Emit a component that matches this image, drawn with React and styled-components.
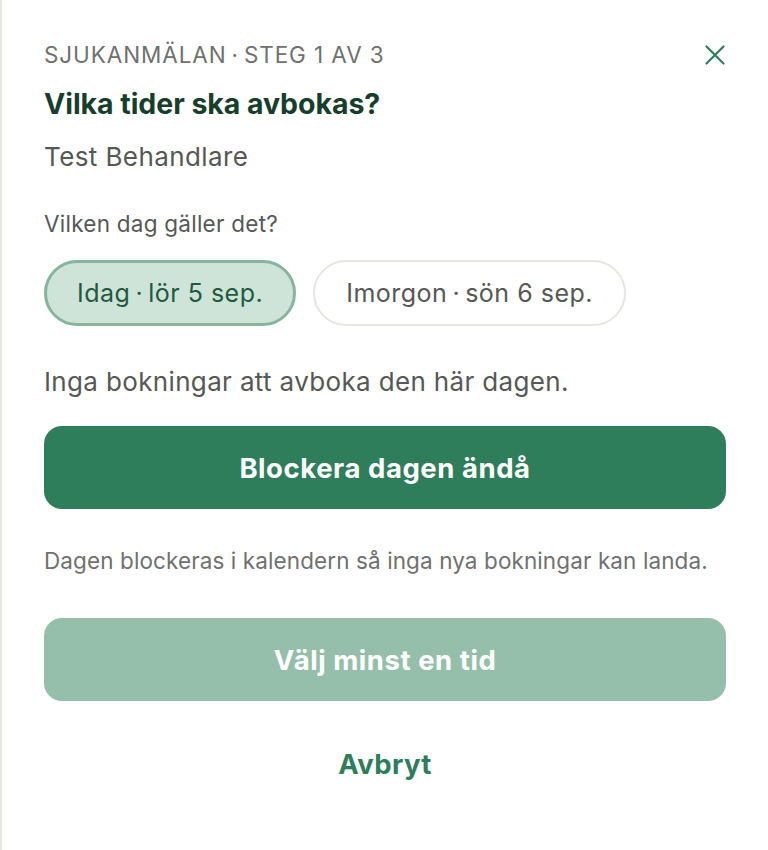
import React, { useState } from 'react';
import styled, { createGlobalStyle } from 'styled-components';

const GlobalStyle = createGlobalStyle`
  html, body {
    margin: 0;
    padding: 0;
    background: #ffffff;
  }
  body {
    font-family: 'Inter', 'Noto Sans', sans-serif;
    -webkit-font-smoothing: antialiased;
  }
`;

const Sheet = styled.div`
  box-sizing: border-box;
  width: 768px;
  min-height: 850px;
  border-left: 2px solid #e6e6e1;
  padding: 38px 42px 40px 42px;
  display: flex;
  flex-direction: column;
`;

const Header = styled.div`
  display: flex;
  justify-content: space-between;
  align-items: flex-start;
`;

const Step = styled.div`
  font-size: 22.5px;
  line-height: 34px;
  color: #6f716e;
  letter-spacing: 0.9px;
  text-transform: uppercase;
`;

const CloseButton = styled.button`
  border: none;
  background: none;
  padding: 0;
  margin-top: 5px;
  margin-right: -1px;
  width: 24px;
  height: 24px;
  cursor: pointer;
  color: #2e7d5b;
  display: flex;
`;

const Title = styled.h2`
  margin: 14px 0 0;
  font-size: 28.5px;
  line-height: 36px;
  font-weight: 700;
  color: #173d2c;
  letter-spacing: -0.05px;
`;

const Subtitle = styled.div`
  margin-top: 19px;
  font-size: 26px;
  line-height: 32px;
  color: #555855;
  letter-spacing: 0.4px;
`;

const Label = styled.div`
  margin-top: 37px;
  font-size: 22.5px;
  line-height: 28px;
  color: #555855;
  letter-spacing: 0.25px;
`;

const ChipRow = styled.div`
  display: flex;
  gap: 17px;
  margin-top: 22px;
`;

const Chip = styled.button`
  box-sizing: border-box;
  height: 66px;
  padding: 0 ${p => (p.$active ? 30 : 31)}px;
  border-radius: 999px;
  font-family: inherit;
  font-size: 25px;
  letter-spacing: 0.5px;
  cursor: pointer;
  border: ${p => (p.$active ? '3px solid #86b49c' : '2px solid #e6e6e1')};
  background: ${p => (p.$active ? '#cfe4d8' : '#ffffff')};
  color: ${p => (p.$active ? '#1f5a3f' : '#555855')};
`;

const Notice = styled.p`
  margin: 39px 0 0;
  font-size: 26px;
  line-height: 34px;
  color: #555855;
  letter-spacing: 0.35px;
`;

const PrimaryButton = styled.button`
  box-sizing: border-box;
  width: 100%;
  height: 83px;
  border: none;
  border-radius: 18px;
  font-family: inherit;
  font-size: 27.5px;
  font-weight: 700;
  letter-spacing: 0.55px;
  color: #ffffff;
  background: ${p => (p.disabled ? '#95bfab' : '#2e7d5b')};
  cursor: ${p => (p.disabled ? 'default' : 'pointer')};
  margin-top: ${p => p.$top}px;
`;

const Hint = styled.p`
  margin: 38px 0 0;
  font-size: 22.5px;
  line-height: 28px;
  color: #6f716e;
  letter-spacing: 0.1px;
`;

const TextButton = styled.button`
  align-self: center;
  margin-top: 46px;
  padding: 0;
  border: none;
  background: none;
  font-family: inherit;
  font-size: 27.5px;
  line-height: 34px;
  font-weight: 700;
  letter-spacing: 0.4px;
  color: #2e7d5b;
  cursor: pointer;
`;

// thin spaces round the dot keep the separator tight
const dot = '\u2009·\u2009';

const days = [
  { id: 'today', label: `Idag${dot}lör 5 sep.` },
  { id: 'tomorrow', label: `Imorgon${dot}sön 6 sep.` },
];

export default function App() {
  const [day, setDay] = useState('today');

  return (
    <>
      <GlobalStyle />
      <Sheet>
        <Header>
          <Step>{`Sjukanmälan${dot}Steg 1 av 3`}</Step>
          <CloseButton aria-label="Stäng">
            <svg width="24" height="24" viewBox="0 0 24 24" fill="none" stroke="currentColor" strokeWidth="2.2" strokeLinecap="round">
              <path d="M3.5 3.5l17 17M20.5 3.5l-17 17" />
            </svg>
          </CloseButton>
        </Header>
        <Title>Vilka tider ska avbokas?</Title>
        <Subtitle>Test Behandlare</Subtitle>

        <Label>Vilken dag gäller det?</Label>
        <ChipRow>
          {days.map(d => (
            <Chip key={d.id} $active={day === d.id} onClick={() => setDay(d.id)}>
              {d.label}
            </Chip>
          ))}
        </ChipRow>

        <Notice>Inga bokningar att avboka den här dagen.</Notice>
        <PrimaryButton $top={27}>Blockera dagen ändå</PrimaryButton>
        <Hint>Dagen blockeras i kalendern så inga nya bokningar kan landa.</Hint>
        <PrimaryButton $top={43} disabled>Välj minst en tid</PrimaryButton>
        <TextButton>Avbryt</TextButton>
      </Sheet>
    </>
  );
}
